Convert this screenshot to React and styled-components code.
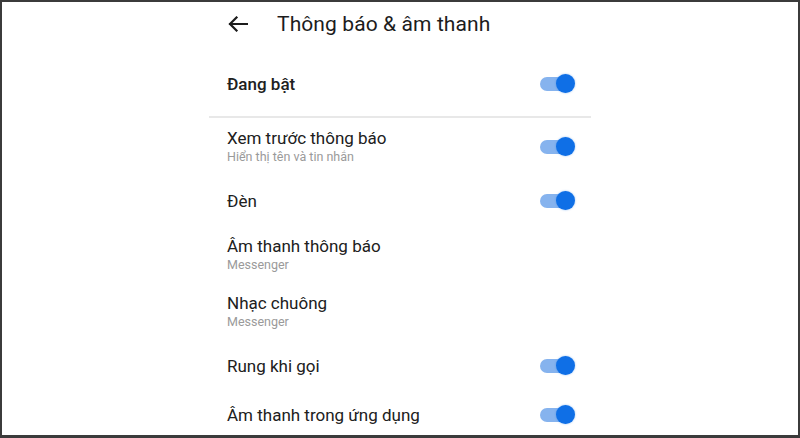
import React from "react";
import styled, { createGlobalStyle } from "styled-components";

const GlobalStyle = createGlobalStyle`
  html, body {
    margin: 0;
    padding: 0;
    background: #ffffff;
  }
  body {
    font-family: Roboto, "Noto Sans", "Liberation Sans", sans-serif;
    -webkit-font-smoothing: antialiased;
  }
`;

export const Frame = styled.div`
  width: 800px;
  height: 438px;
  box-sizing: border-box;
  border: 2px solid #3b3b3b;
  border-bottom-width: 3px;
  background: #ffffff;
  overflow: hidden;
  display: flex;
  justify-content: center;
  align-items: flex-start;
`;

export const Screen = styled.div`
  width: 382px;
  display: flex;
  flex-direction: column;
  flex-shrink: 0;
`;

export const Header = styled.div`
  height: 44px;
  flex-shrink: 0;
  display: flex;
  align-items: center;
  padding-left: 19px;
`;

export const BackButton = styled.div`
  width: 20px;
  height: 16px;
  display: flex;
  align-items: center;
  margin-right: 29px;
  color: #1c1c1c;
`;

export const Title = styled.h1`
  margin: 0;
  font-size: 21px;
  font-weight: 400;
  color: #1c1c1c;
  letter-spacing: 0.1px;
`;

export const Row = styled.div`
  height: ${(props) => props.h}px;
  flex-shrink: 0;
  box-sizing: border-box;
  padding: ${(props) => props.top || 0}px 16px 0 18px;
  display: flex;
  align-items: center;
  justify-content: space-between;
`;

export const Labels = styled.div`
  display: flex;
  flex-direction: column;
`;

export const Label = styled.span`
  font-size: 17px;
  line-height: 20px;
  font-weight: ${(props) => (props.strong ? 500 : 400)};
  color: #202020;
`;

export const SubLabel = styled.span`
  font-size: 12.5px;
  line-height: 18px;
  color: #9a9a9a;
`;

export const Divider = styled.div`
  height: 2px;
  flex-shrink: 0;
  background: #e8e8e8;
`;

export const Switch = styled.div`
  position: relative;
  width: 36px;
  height: 20px;
  flex-shrink: 0;
`;

export const Track = styled.div`
  position: absolute;
  left: 1px;
  top: 3px;
  width: 30px;
  height: 14px;
  border-radius: 7px;
  background: #86b3ee;
`;

export const Thumb = styled.div`
  position: absolute;
  right: 0;
  top: 0;
  width: 19px;
  height: 19px;
  border-radius: 50%;
  background: #0f6fe6;
  box-shadow: 0 0 2px rgba(15, 111, 230, 0.5);
`;

function Toggle() {
  return (
    <Switch>
      <Track />
      <Thumb />
    </Switch>
  );
}

function BackArrow() {
  return (
    <svg width="20" height="16" viewBox="0 0 20 16" fill="none">
      <path
        d="M19 8H2M8.5 1.5L2 8l6.5 6.5"
        stroke="currentColor"
        strokeWidth="2.2"
        strokeLinecap="square"
      />
    </svg>
  );
}

const settings = [
  { label: "Xem trước thông báo", sub: "Hiển thị tên và tin nhắn", toggle: true, h: 58 },
  { label: "Đèn", toggle: true, h: 50 },
  { label: "Âm thanh thông báo", sub: "Messenger", h: 58 },
  { label: "Nhạc chuông", sub: "Messenger", h: 56 },
  { label: "Rung khi gọi", toggle: true, h: 52 },
  { label: "Âm thanh trong ứng dụng", toggle: true, h: 46 },
];

export default function App() {
  return (
    <>
      <GlobalStyle />
      <Frame>
        <Screen>
          <Header>
            <BackButton>
              <BackArrow />
            </BackButton>
            <Title>Thông báo &amp; âm thanh</Title>
          </Header>
          <Row h={70} top={6}>
            <Label strong>Đang bật</Label>
            <Toggle />
          </Row>
          <Divider />
          {settings.map((item) => (
            <Row key={item.label} h={item.h}>
              <Labels>
                <Label>{item.label}</Label>
                {item.sub && <SubLabel>{item.sub}</SubLabel>}
              </Labels>
              {item.toggle && <Toggle />}
            </Row>
          ))}
        </Screen>
      </Frame>
    </>
  );
}
